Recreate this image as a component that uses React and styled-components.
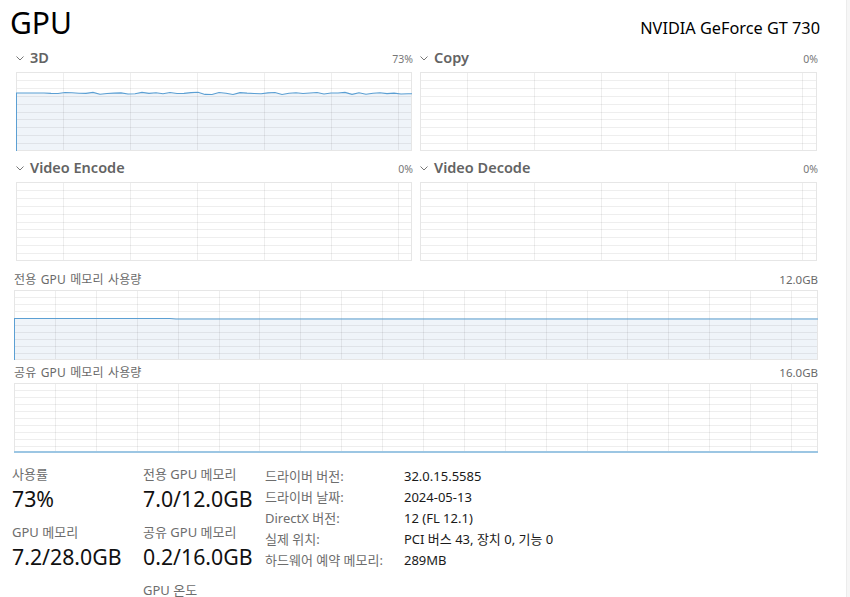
import React from "react";
import styled, { createGlobalStyle } from "styled-components";

const GlobalStyle = createGlobalStyle`
  html, body { margin: 0; padding: 0; background: #ffffff; }
  body {
    font-family: "Noto Sans", "Noto Sans CJK KR", sans-serif;
    color: #1a1a1a;
    -webkit-font-smoothing: antialiased;
  }
`;

const Page = styled.div`
  display: flex;
  width: 850px;
  height: 597px;
  overflow: hidden;
  background: #fff;
`;

const Main = styled.div`
  width: 846px;
  display: flex;
  flex-direction: column;
`;

const ScrollTrack = styled.div`
  width: 3px;
  background: #f6f6f6;
  border-left: 1px solid #ececec;
`;

const TitleRow = styled.div`
  display: flex;
  align-items: baseline;
  justify-content: space-between;
  padding: 3px 26px 0 10px;
  height: 47px;
  box-sizing: border-box;
`;

const Title = styled.div`
  font-size: 30px;
  line-height: 40px;
  color: #000;
`;

const Adapter = styled.div`
  font-size: 16.3px;
  line-height: 40px;
  color: #000;
`;

const EngineGrid = styled.div`
  display: grid;
  grid-template-columns: 396px 397px;
  column-gap: 8px;
  row-gap: 6px;
  margin-left: 16px;
`;

const EnginePanel = styled.div`
  display: flex;
  flex-direction: column;
  gap: 5px;
`;

const EngineHeader = styled.div`
  display: flex;
  align-items: baseline;
  height: 20px;
`;

const ChevronBox = styled.span`
  width: 14px;
  display: inline-flex;
  align-self: center;
  margin-top: 2px;
`;

const EngineName = styled.span`
  font-size: 14.5px;
  line-height: 20px;
  font-weight: 600;
  color: #636363;
`;

const Pct = styled.span`
  margin-left: auto;
  margin-right: -1px;
  font-size: 10.5px;
  line-height: 20px;
  color: #777;
`;

const ChartBox = styled.div`
  width: ${(p) => p.$w}px;
  height: ${(p) => p.$h}px;
  line-height: 0;
`;

const MemSection = styled.div`
  display: flex;
  flex-direction: column;
  gap: 5px;
  margin: 11px 0 0 14px;
  width: 804px;
`;

const MemBlock = styled.div`
  display: flex;
  flex-direction: column;
  gap: 2px;
`;

const MemLabelRow = styled.div`
  display: flex;
  justify-content: space-between;
  font-size: 11.5px;
  line-height: 16px;
  color: #6a6a6a;
`;

const MemTitle = styled.span`
  font-size: 12px;
  letter-spacing: 0.15px;
  word-spacing: 1px;
`;

const Stats = styled.div`
  display: grid;
  grid-template-columns: 131px 122px auto;
  margin: 11px 0 0 12px;
`;

const StatCol = styled.div`
  display: flex;
  flex-direction: column;
`;

const StatLabel = styled.div`
  font-size: 13px;
  line-height: 20px;
  color: #6d6d6d;
  white-space: nowrap;
`;

const StatValue = styled.div`
  font-size: 21.3px;
  line-height: 30px;
  color: #111;
  margin-bottom: 8px;
  white-space: nowrap;
`;

const Props = styled.div`
  display: grid;
  grid-template-columns: 139px auto;
  grid-auto-rows: 21px;
  align-items: center;
  font-size: 13px;
  margin-top: 1px;
`;

const PropKey = styled.div`
  color: #6d6d6d;
  white-space: nowrap;
`;

const PropVal = styled.div`
  color: #1a1a1a;
  white-space: nowrap;
`;

function Chevron() {
  return (
    <svg width="8" height="5" viewBox="0 0 8 5">
      <polyline points="0.5,0.5 4,4 7.5,0.5" fill="none" stroke="#777" strokeWidth="1" />
    </svg>
  );
}

function seeded(seed) {
  let s = seed;
  return () => {
    s = (s * 9301 + 49297) % 233280;
    return s / 233280;
  };
}

function makeLine(w, base, amp, seed, step, flatStart) {
  const r = seeded(seed);
  const pts = [];
  for (let x = 0; x <= w; x += step) {
    let y = base;
    if (x > flatStart) y = base + (r() - 0.35) * amp;
    pts.push([x, y]);
  }
  if (pts[pts.length - 1][0] !== w) pts.push([w, pts[pts.length - 1][1]]);
  return pts;
}

function Chart({ w, h, colStep, colStart, rows, line, lineColor = "#5b9fd3", bottomBar }) {
  const vlines = [];
  for (let x = colStart; x < w - 1; x += colStep) vlines.push(Math.round(x) + 0.5);
  const hlines = [];
  for (let i = 1; i < rows; i++) hlines.push(Math.round((h * i) / rows) + 0.5);
  let fill = null;
  let stroke = null;
  let left = null;
  if (line) {
    const d = line.map(([x, y]) => `${x},${y}`).join(" ");
    fill = <polygon points={`0,${h} ${d} ${w},${h}`} fill="#eff4f9" />;
    stroke = <polyline points={d} fill="none" stroke={lineColor} strokeWidth="1.1" />;
    left = <line x1="0.5" y1={line[0][1]} x2="0.5" y2={h} stroke={lineColor} strokeWidth="1" />;
  }
  return (
    <svg width={w} height={h} viewBox={`0 0 ${w} ${h}`} shapeRendering="auto">
      {fill}
      <g shapeRendering="crispEdges" stroke="rgba(0,0,0,0.065)" strokeWidth="1">
        {vlines.map((x) => (
          <line key={"v" + x} x1={x} y1="0" x2={x} y2={h} />
        ))}
        {hlines.map((y) => (
          <line key={"h" + y} x1="0" y1={y} x2={w} y2={y} />
        ))}
      </g>
      <rect x="0.5" y="0.5" width={w - 1} height={h - 1} fill="none" stroke="#e6e6e6" shapeRendering="crispEdges" />
      {stroke}
      {left}
      {bottomBar && <rect x="0" y={h - 2} width={w} height="2" fill="#9cc6e3" />}
    </svg>
  );
}

const line3D = makeLine(396, 21, 2.4, 7, 7, 28);
const lineMem = (() => {
  const pts = [];
  for (let x = 0; x <= 804; x += 6) {
    let y = 29;
    if (x < 160) y = 28.5;
    pts.push([x, y]);
  }
  return pts;
})();

const engines = [
  { name: "3D", pct: "73%", line: line3D, w: 396 },
  { name: "Copy", pct: "0%", w: 397 },
  { name: "Video Encode", pct: "0%", w: 396 },
  { name: "Video Decode", pct: "0%", w: 397 },
];

export default function App() {
  return (
    <Page>
      <GlobalStyle />
      <Main>
        <TitleRow>
          <Title>GPU</Title>
          <Adapter>NVIDIA GeForce GT 730</Adapter>
        </TitleRow>
        <EngineGrid>
          {engines.map((e) => (
            <EnginePanel key={e.name}>
              <EngineHeader>
                <ChevronBox>
                  <Chevron />
                </ChevronBox>
                <EngineName>{e.name}</EngineName>
                <Pct>{e.pct}</Pct>
              </EngineHeader>
              <ChartBox $w={e.w} $h={79}>
                <Chart w={e.w} h={79} colStep={67} colStart={47} rows={10} line={e.line} />
              </ChartBox>
            </EnginePanel>
          ))}
        </EngineGrid>
        <MemSection>
          <MemBlock>
            <MemLabelRow>
              <MemTitle>전용 GPU 메모리 사용량</MemTitle>
              <span>12.0GB</span>
            </MemLabelRow>
            <ChartBox $w={804} $h={70}>
              <Chart w={804} h={70} colStep={40.9} colStart={40.9} rows={10} line={lineMem} />
            </ChartBox>
          </MemBlock>
          <MemBlock>
            <MemLabelRow>
              <MemTitle>공유 GPU 메모리 사용량</MemTitle>
              <span>16.0GB</span>
            </MemLabelRow>
            <ChartBox $w={804} $h={70}>
              <Chart w={804} h={70} colStep={40.9} colStart={40.9} rows={10} bottomBar />
            </ChartBox>
          </MemBlock>
        </MemSection>
        <Stats>
          <StatCol>
            <StatLabel>사용률</StatLabel>
            <StatValue>73%</StatValue>
            <StatLabel>GPU 메모리</StatLabel>
            <StatValue>7.2/28.0GB</StatValue>
          </StatCol>
          <StatCol>
            <StatLabel>전용 GPU 메모리</StatLabel>
            <StatValue>7.0/12.0GB</StatValue>
            <StatLabel>공유 GPU 메모리</StatLabel>
            <StatValue>0.2/16.0GB</StatValue>
            <StatLabel>GPU 온도</StatLabel>
          </StatCol>
          <Props>
            <PropKey>드라이버 버전:</PropKey>
            <PropVal>32.0.15.5585</PropVal>
            <PropKey>드라이버 날짜:</PropKey>
            <PropVal>2024-05-13</PropVal>
            <PropKey>DirectX 버전:</PropKey>
            <PropVal>12 (FL 12.1)</PropVal>
            <PropKey>실제 위치:</PropKey>
            <PropVal>PCI 버스 43, 장치 0, 기능 0</PropVal>
            <PropKey>하드웨어 예약 메모리:</PropKey>
            <PropVal>289MB</PropVal>
          </Props>
        </Stats>
      </Main>
      <ScrollTrack />
    </Page>
  );
}
